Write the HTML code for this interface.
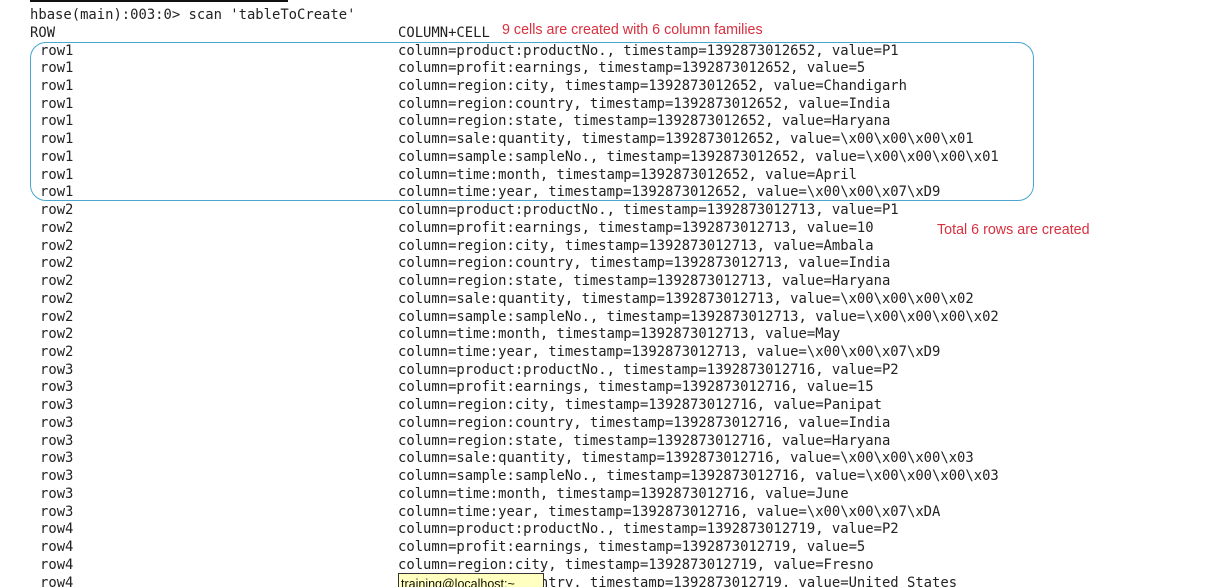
<!DOCTYPE html>
<html><head><meta charset="utf-8"><style>
html,body{margin:0;padding:0;background:#fff;width:1210px;height:587px;overflow:hidden;position:relative}
.t{position:absolute;font-family:"DejaVu Sans Mono","Liberation Mono",monospace;font-size:13.87px;color:#222;white-space:pre;line-height:17.73px}
.r{position:absolute;font-family:"Liberation Sans",sans-serif;font-size:14.3px;color:#d9303f;white-space:pre}
</style></head><body>
<div style="position:absolute;left:30px;top:0;width:258px;height:2px;background:#111"></div>
<div class="t" style="left:30px;top:7px">hbase(main):003:0&gt; scan 'tableToCreate'
ROW</div>
<div class="t" style="left:398px;top:24.7px">COLUMN+CELL</div>
<div class="r" style="left:502px;top:22px">9 cells are created with 6 column families</div>
<div class="r" style="left:937px;top:222px">Total 6 rows are created</div>
<div style="position:absolute;left:30px;top:42px;width:1002px;height:157px;border:1.3px solid #4aa6cf;border-radius:16px"></div>
<div class="t" style="left:40px;top:42.5px">row1
row1
row1
row1
row1
row1
row1
row1
row1
row2
row2
row2
row2
row2
row2
row2
row2
row2
row3
row3
row3
row3
row3
row3
row3
row3
row3
row4
row4
row4
row4</div>
<div class="t" style="left:398px;top:42.5px">column=product:productNo., timestamp=1392873012652, value=P1
column=profit:earnings, timestamp=1392873012652, value=5
column=region:city, timestamp=1392873012652, value=Chandigarh
column=region:country, timestamp=1392873012652, value=India
column=region:state, timestamp=1392873012652, value=Haryana
column=sale:quantity, timestamp=1392873012652, value=\x00\x00\x00\x01
column=sample:sampleNo., timestamp=1392873012652, value=\x00\x00\x00\x01
column=time:month, timestamp=1392873012652, value=April
column=time:year, timestamp=1392873012652, value=\x00\x00\x07\xD9
column=product:productNo., timestamp=1392873012713, value=P1
column=profit:earnings, timestamp=1392873012713, value=10
column=region:city, timestamp=1392873012713, value=Ambala
column=region:country, timestamp=1392873012713, value=India
column=region:state, timestamp=1392873012713, value=Haryana
column=sale:quantity, timestamp=1392873012713, value=\x00\x00\x00\x02
column=sample:sampleNo., timestamp=1392873012713, value=\x00\x00\x00\x02
column=time:month, timestamp=1392873012713, value=May
column=time:year, timestamp=1392873012713, value=\x00\x00\x07\xD9
column=product:productNo., timestamp=1392873012716, value=P2
column=profit:earnings, timestamp=1392873012716, value=15
column=region:city, timestamp=1392873012716, value=Panipat
column=region:country, timestamp=1392873012716, value=India
column=region:state, timestamp=1392873012716, value=Haryana
column=sale:quantity, timestamp=1392873012716, value=\x00\x00\x00\x03
column=sample:sampleNo., timestamp=1392873012716, value=\x00\x00\x00\x03
column=time:month, timestamp=1392873012716, value=June
column=time:year, timestamp=1392873012716, value=\x00\x00\x07\xDA
column=product:productNo., timestamp=1392873012719, value=P2
column=profit:earnings, timestamp=1392873012719, value=5
column=region:city, timestamp=1392873012719, value=Fresno
column=region:country, timestamp=1392873012719, value=United States</div>
<div style="position:absolute;left:398px;top:573px;width:142px;height:20px;background:#ffffbf;border:1px solid #333;font-family:'Liberation Sans',sans-serif;font-size:12.5px;line-height:20px;padding-left:2px;color:#111;overflow:hidden;white-space:nowrap">training@localhost:~</div>
</body></html>
